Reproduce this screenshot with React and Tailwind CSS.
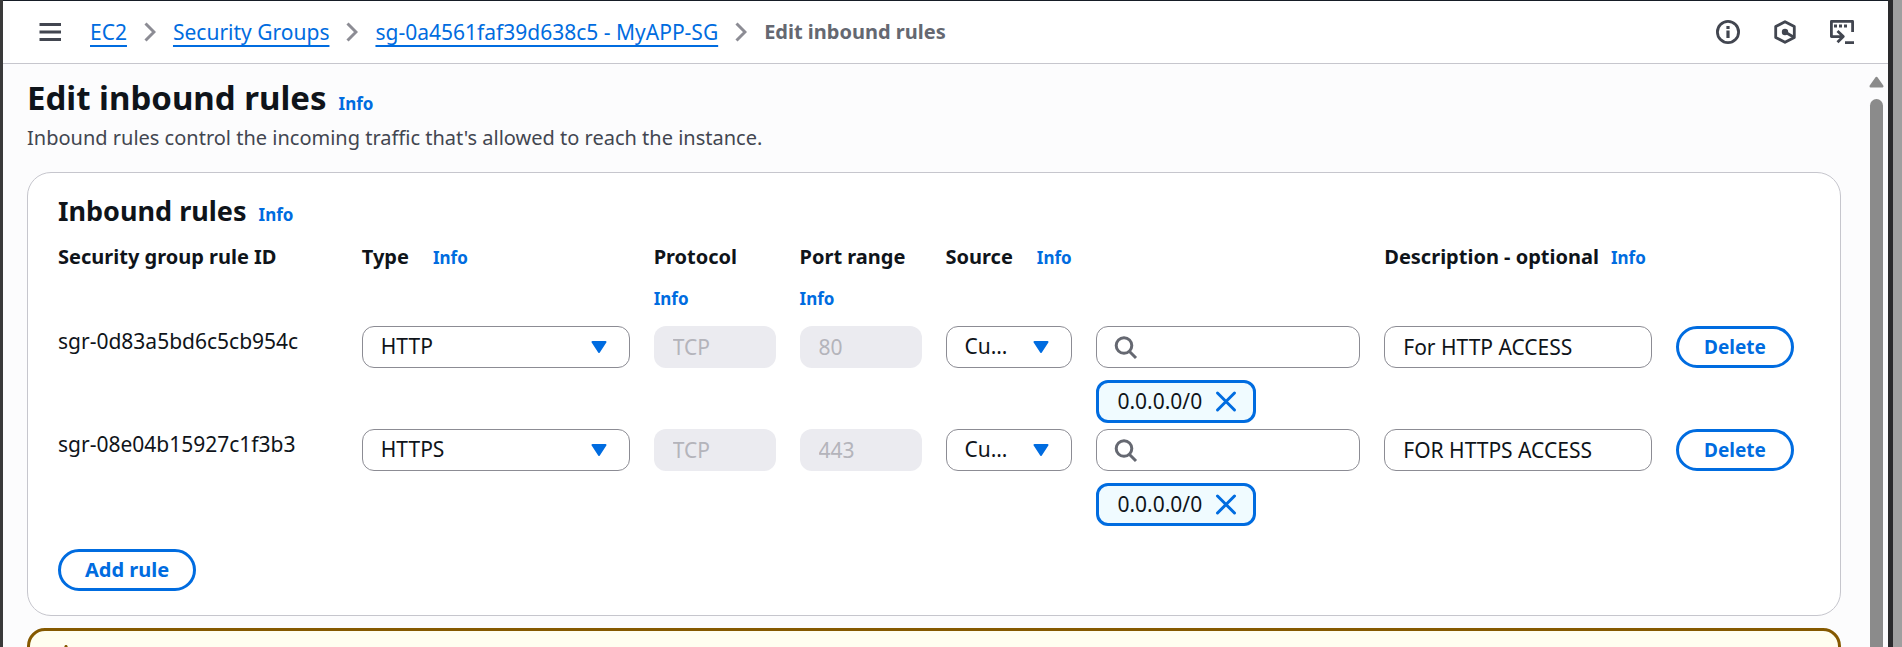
import { Fragment } from "react";

const crumbs = ["EC2", "Security Groups", "sg-0a4561faf39d638c5 - MyAPP-SG"];

const rules = [
  { id: "sgr-0d83a5bd6c5cb954c", type: "HTTP", protocol: "TCP", port: "80", cidr: "0.0.0.0/0", note: "For HTTP ACCESS" },
  { id: "sgr-08e04b15927c1f3b3", type: "HTTPS", protocol: "TCP", port: "443", cidr: "0.0.0.0/0", note: "FOR HTTPS ACCESS" },
];

const gridRow = "grid grid-cols-[280fr_268fr_122fr_122fr_127fr_264fr_268fr_134fr] gap-x-6";
const control = "h-[42px] w-full min-w-0 rounded-xl border border-[#8c8c94] bg-white px-[18px] text-[21px] text-[#0f141a]";
const disabled = "h-[42px] w-full min-w-0 rounded-xl bg-[#ebebf0] px-[19px] text-[21px] text-[#b4b4bb]";
const pill = "h-[42px] rounded-full border-[3px] border-[#006ce0] bg-white font-bold text-[#006ce0]";

function Info() {
  return (
    <a href="#info" className="text-[17px] font-bold leading-[30px] text-[#006ce0]">
      Info
    </a>
  );
}

function ColumnHead({ label, span = "", tight = false, colSpan }) {
  return (
    <th scope="col" colSpan={colSpan} className={`min-w-0 p-0 text-left text-xl font-bold leading-[30px] ${span}`}>
      <div className={tight ? "flex items-baseline gap-x-3 whitespace-nowrap" : "flex flex-wrap items-baseline gap-x-6 gap-y-3"}>
        <span>{label}</span>
        <Info />
      </div>
    </th>
  );
}

function Chevron() {
  return (
    <svg className="h-5 w-3 shrink-0" viewBox="0 0 12 20" fill="none" stroke="#8c8c94" strokeWidth="3" aria-hidden="true">
      <path d="M1.5 1.5 10 10l-8.500 8.500" />
    </svg>
  );
}

function Select({ label, value, options, className = "" }) {
  return (
    <div className="relative min-w-0">
      <select aria-label={label} defaultValue={value} className={`${control} appearance-none truncate ${className}`}>
        {options.map((o) => (
          <option key={o}>{o}</option>
        ))}
      </select>
      <svg className="pointer-events-none absolute right-[23px] top-[15px] h-3 w-4" viewBox="0 0 16 12" aria-hidden="true">
        <path d="M1.500 1h13L8 11Z" fill="#006ce0" stroke="#006ce0" strokeWidth="2" strokeLinejoin="round" />
      </svg>
    </div>
  );
}

function RuleRow({ rule }) {
  return (
    <tr className={gridRow}>
      <td className="p-0 text-[21px] leading-[30px]">{rule.id}</td>
      <td className="min-w-0 p-0">
        <Select label={`Type for ${rule.id}`} value={rule.type} options={["HTTP", "HTTPS", "SSH"]} />
      </td>
      <td className="min-w-0 p-0">
        <input aria-label={`Protocol for ${rule.id}`} disabled defaultValue={rule.protocol} className={disabled} />
      </td>
      <td className="min-w-0 p-0">
        <input aria-label={`Port range for ${rule.id}`} disabled defaultValue={rule.port} className={disabled} />
      </td>
      <td className="min-w-0 p-0">
        <Select label={`Source type for ${rule.id}`} value="Custom" options={["Custom", "Anywhere-IPv4", "My IP"]} className="pr-[58px]" />
      </td>
      <td className="flex min-w-0 flex-col items-start gap-3 p-0">
        <div className="relative w-full">
          <input type="search" aria-label={`Source for ${rule.id}`} className={`${control} appearance-none pl-12`} />
          <svg className="pointer-events-none absolute left-[18px] top-[10px] h-6 w-6" viewBox="0 0 24 24" fill="none" stroke="#656871" strokeWidth="3" aria-hidden="true">
            <circle cx="10" cy="9.500" r="7.800" />
            <path d="m15.500 15.500 6.500 6.500" />
          </svg>
        </div>
        <div className="flex h-[43px] items-center gap-3 rounded-xl border-[3px] border-[#006ce0] bg-[#f0fbff] pl-[18px] pr-[15px] text-[21px]">
          <span>{rule.cidr}</span>
          <button type="button" aria-label={`Remove ${rule.cidr}`}>
            <svg className="h-6 w-6" viewBox="0 0 24 24" fill="none" stroke="#006ce0" strokeWidth="3" strokeLinecap="round" aria-hidden="true">
              <path d="m3.500 3 17 17M20.500 3l-17 17" />
            </svg>
          </button>
        </div>
      </td>
      <td className="min-w-0 p-0">
        <input type="text" aria-label={`Description for ${rule.id}`} defaultValue={rule.note} className={control} />
      </td>
      <td className="p-0">
        <button type="button" className={`${pill} px-[25px] text-[19px]`}>Delete</button>
      </td>
    </tr>
  );
}

function TopBar() {
  return (
    <header className="flex h-16 shrink-0 items-center border-b border-t border-b-[#c6c6cd] border-t-[#161d26] bg-white pl-9 pr-[34px]">
      <button type="button" aria-label="Open navigation">
        <svg className="h-6 w-6" viewBox="0 0 24 24" stroke="#424650" strokeWidth="3" aria-hidden="true">
          <path d="M.5 4.500h21.500M.5 12h21.500M.5 19.500h21.500" />
        </svg>
      </button>
      <nav aria-label="Breadcrumb" className="ml-[27px] flex items-center gap-[17px] leading-[30px]">
        {crumbs.map((c) => (
          <Fragment key={c}>
            <a href="#crumb" className="whitespace-nowrap text-[21px] text-[#006ce0] underline decoration-2 underline-offset-[5px] [text-decoration-skip-ink:none]">
              {c}
            </a>
            <Chevron />
          </Fragment>
        ))}
        <span className="whitespace-nowrap text-xl font-bold text-[#656871]">Edit inbound rules</span>
      </nav>
      <div className="ml-auto flex items-center gap-[33px]">
        <button type="button" aria-label="Information">
          <svg className="h-6 w-6" viewBox="0 0 24 24" fill="none" stroke="#424650" strokeWidth="2.800" aria-hidden="true">
            <circle cx="12" cy="12" r="10.600" />
            <path d="M12 10.500v7.500M12 6v3" strokeWidth="3.200" />
          </svg>
        </button>
        <button type="button" aria-label="Diagnostics">
          <svg className="h-6 w-6" viewBox="0 0 24 24" fill="none" stroke="#424650" strokeWidth="2.800" strokeLinejoin="round" aria-hidden="true">
            <path d="M12 1.700 21.300 6.600v10.800L12 22.300l-9.300-4.900V6.600Z" />
            <circle cx="12" cy="12" r="3.200" fill="#424650" stroke="none" />
            <path d="m12 12 8.500 5" />
          </svg>
        </button>
        <button type="button" aria-label="CloudShell">
          <svg className="h-6 w-6" viewBox="0 0 24 24" fill="none" stroke="#424650" strokeWidth="2.800" strokeLinejoin="round" aria-hidden="true">
            <path d="M22.600 12V1.400H1.400v15.200H13M7.500 11l5.800 5.600-5.800 5.600M15 22.600h9" />
            <path d="M4 6h13" strokeWidth="3" strokeDasharray="3 2" />
          </svg>
        </button>
      </div>
    </header>
  );
}

export default function App() {
  return (
    <div className="flex h-screen overflow-hidden border-l-[3px] border-[#3a3a3a] bg-[#fcfcfd] font-['Noto_Sans',sans-serif] text-[#0f141a]">
      <div className="flex min-w-0 flex-1 flex-col">
        <TopBar />
        <div className="flex min-h-0 flex-1">
          <main className="min-w-0 flex-1 overflow-hidden pl-6 pr-7 pt-[14px]">
            <div className="flex items-baseline gap-3">
              <h1 className="text-[33px] font-bold leading-10">Edit inbound rules</h1>
              <Info />
            </div>
            <p className="mt-1 text-xl leading-[30px] text-[#424650]">
              Inbound rules control the incoming traffic that's allowed to reach the instance.
            </p>

            <section className="mt-[19px] rounded-3xl border border-[#c6c6cd] bg-white px-[30px] pb-6 pt-5">
              <div className="flex items-baseline gap-3">
                <h2 className="text-[27px] font-bold leading-9">Inbound rules</h2>
                <Info />
              </div>
              <table className="mt-3 block">
                <thead className="block">
                  <tr className={gridRow}>
                    <th scope="col" className="whitespace-nowrap p-0 text-left text-xl font-bold leading-[30px]">Security group rule ID</th>
                    <ColumnHead label="Type" />
                    <ColumnHead label="Protocol" />
                    <ColumnHead label="Port range" />
                    <ColumnHead label="Source" colSpan={2} span="col-span-2" />
                    <ColumnHead label="Description - optional" tight />
                  </tr>
                </thead>
                <tbody className="mt-3 flex flex-col gap-[6px]">
                  {rules.map((r) => (
                    <RuleRow key={r.id} rule={r} />
                  ))}
                </tbody>
              </table>
              <button type="button" className={`${pill} mt-[23px] px-6 text-xl`}>Add rule</button>
            </section>

            <div role="alert" className="mt-3 h-24 rounded-[18px] border-[3px] border-[#855900] bg-[#fffef0] px-7 py-[14px]">
              <svg className="h-6 w-6" viewBox="0 0 24 24" fill="none" stroke="#855900" strokeWidth="3" strokeLinejoin="round" aria-hidden="true">
                <path d="M8 1.500 15.500 21H1.500ZM8 9v6M8 16.500v2" />
              </svg>
            </div>
          </main>
          <div className="flex w-[19px] shrink-0 flex-col items-start pt-3">
            <svg className="h-3 w-[15px]" viewBox="0 0 15 12" aria-hidden="true">
              <path d="M7.500 2 13.300 10.300H1.700Z" fill="#8b8b8b" stroke="#8b8b8b" strokeWidth="2.400" strokeLinejoin="round" />
            </svg>
            <div className="ml-px mt-[11px] w-[13px] flex-1 rounded-t-full bg-[#8b8b8b]" />
          </div>
        </div>
      </div>
      <div className="w-[5px] shrink-0 bg-[#2a2a2c]" />
      <div className="w-[9px] shrink-0 bg-[#9f9f9f]" />
    </div>
  );
}
